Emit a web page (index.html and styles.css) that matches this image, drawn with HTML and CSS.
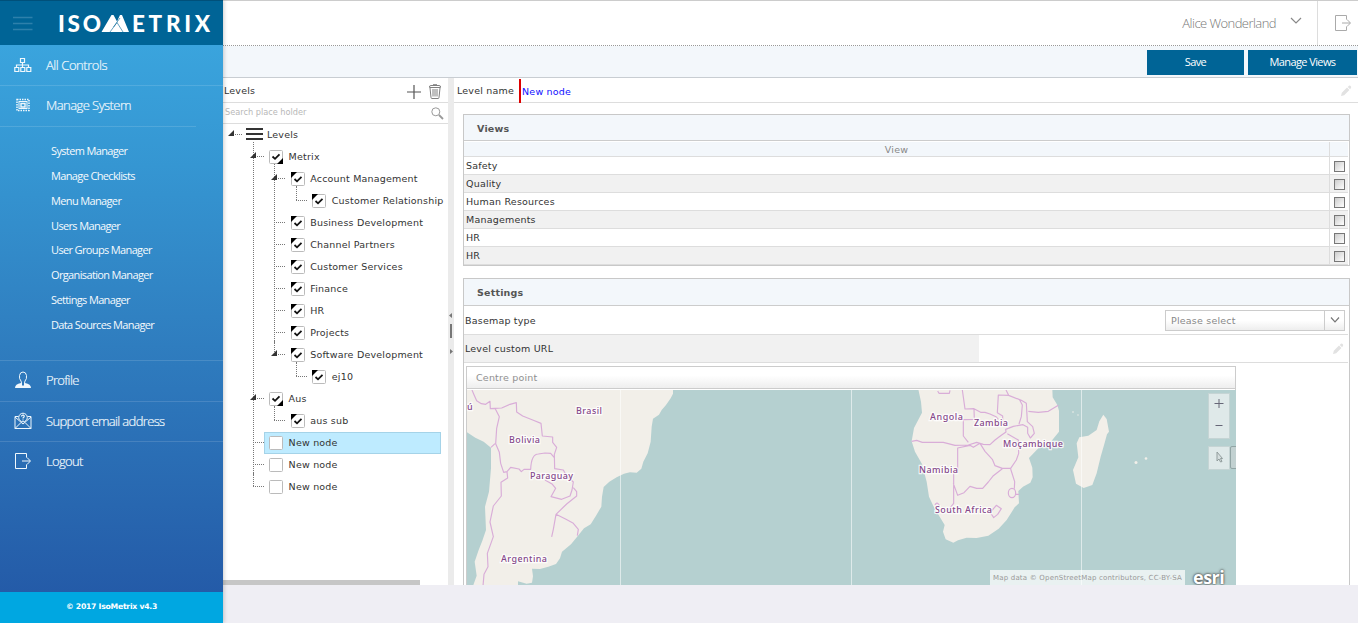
FILE: index.html
```html
<!DOCTYPE html>
<html lang="en">
<head>
<meta charset="utf-8">
<title>IsoMetrix</title>
<link rel="stylesheet" href="styles.css">
</head>
<body>
<svg class="defs" width="0" height="0" aria-hidden="true">
  <symbol id="exit" viewBox="0 0 18 18"><path d="M12.500 5.500V1.500H1.500V16.500H12.500V12.500" fill="none" stroke="currentColor"/><path d="M8 9H16M13 5.500L16.500 9L13 12.500" fill="none" stroke="currentColor"/></symbol>
  <symbol id="pencil" viewBox="0 0 12 12"><path d="M1 11L1.800 7.800L7 2.600L9.400 5L4.200 10.200ZM7.700 1.900L9 .7Q10 .3 11.200 1.800Q11.500 2.600 10.100 4.300Z" fill="currentColor"/></symbol>
  <symbol id="tick-tl" viewBox="0 0 14 14"><rect x=".5" y=".5" width="13" height="13" rx="1" fill="#fff" stroke="#bbb"/><path d="M0 0H6L0 6Z" fill="#000"/><path d="M3.500 7L6 9.300L10.500 4.800" fill="none" stroke="#111" stroke-width="1.800"/></symbol>
  <symbol id="tick-br" viewBox="0 0 14 14"><rect x=".5" y=".5" width="13" height="13" rx="1" fill="#fff" stroke="#bbb"/><path d="M14 14H8L14 8Z" fill="#000"/><path d="M3.500 6.500L6 8.800L10.500 4.300" fill="none" stroke="#111" stroke-width="1.800"/></symbol>
  <symbol id="tick-no" viewBox="0 0 14 14"><rect x=".5" y=".5" width="13" height="13" rx="1" fill="#fff" stroke="#bbb"/></symbol>
</svg>
<div class="app">
  <aside class="sidebar">
    <div class="brand">
      <svg class="burger" width="20" height="16" viewBox="0 0 20 16"><path d="M0 1.500H19.500M0 7.500H19.500M0 13.500H19.500" stroke="#2d80ab" stroke-width="1.500"/></svg>
      <svg class="logo" width="154" height="20" viewBox="0 0 154 20">
        <text x="-1" y="18" textLength="43" lengthAdjust="spacing">ISO</text>
        <path d="M42.500 18L52.500 1H54.500L58 7.500L61 1H63L70 18Z" fill="#fff"/>
        <path d="M51 18L58 8.500L64 18M54.500 13L61 4" fill="none" stroke="#006496" stroke-width=".6"/>
        <text x="73" y="18" textLength="78" lengthAdjust="spacing">ETRIX</text>
      </svg>
    </div>
    <nav class="nav">
      <a class="item"><svg width="18" height="16" viewBox="0 0 18 16"><path d="M6.500 1.500h4v4h-4zM.8 10.500h4v4h-4zM6.800 10.500h4v4h-4zM12.800 10.500h4v4h-4zM8.500 5.500V10M2.500 10V8H14.500V10" fill="none" stroke="currentColor" stroke-width="1.200"/></svg><span>All Controls</span></a>
      <a class="item parent"><svg width="18" height="16" viewBox="0 0 18 16"><rect x="3" y="2.500" width="12" height="11" fill="none" stroke="currentColor" stroke-width="1.500" stroke-dasharray="1.500 1"/><rect x="5" y="4.500" width="8" height="7" fill="none" stroke="currentColor"/><path d="M7 6.500h4v3.500h-4z" fill="none" stroke="currentColor" stroke-width="1.400"/></svg><span>Manage System</span></a>
      <div class="submenu">
        <a>System Manager</a><a>Manage Checklists</a><a>Menu Manager</a><a>Users Manager</a><a>User Groups Manager</a><a>Organisation Manager</a><a>Settings Manager</a><a>Data Sources Manager</a>
      </div>
      <a class="item"><svg width="18" height="18" viewBox="0 0 18 18"><path d="M7 10Q5 8 5.500 4.500Q6 1 9 1Q12 1 12.500 4.500Q13 8 11 10L10.500 12V15H7.500V12Z" fill="none" stroke="currentColor"/><path d="M1 17Q1 13 7 12V15H11V12Q17 13 17 17Z" fill="currentColor"/></svg><span>Profile</span></a>
      <a class="item"><svg width="18" height="18" viewBox="0 0 18 18"><path d="M4.500 4.500H1V16.500H17V4.500H13.500M1 5L9 12L17 5M1 16.500L7 10.500M17 16.500L11 10.500" fill="none" stroke="currentColor"/><circle cx="9" cy="5.500" r="4.300" fill="#2c75b8" stroke="currentColor"/><path d="M7.500 4.500Q7.700 3 9.200 3.200Q10.700 3.500 10 5Q9 5.500 9 6.500M9 7.500V8.500" fill="none" stroke="currentColor" stroke-width="1.200"/></svg><span>Support email address</span></a>
      <a class="item last"><svg width="18" height="18"><use href="#exit"/></svg><span>Logout</span></a>
    </nav>
    <footer class="copyright">© 2017 IsoMetrix v4.3</footer>
  </aside>

  <div class="content">
    <header class="topbar">
      <span class="user">Alice Wonderland</span>
      <svg class="user-arrow" width="12" height="8" viewBox="0 0 12 8"><path d="M1 1L6 6L11 1" fill="none" stroke="#888" stroke-width="1.200"/></svg>
      <div class="exit"><svg width="18" height="18"><use href="#exit"/></svg></div>
    </header>
    <div class="toolbar"><button>Save</button><button class="wide">Manage Views</button></div>
    <div class="workspace">
      <section class="levels">
        <div class="levels-head"><span>Levels</span>
          <svg width="14" height="14" viewBox="0 0 14 14"><path d="M7 0V14M0 7H14" stroke="#555" stroke-width="1.200"/></svg>
          <svg width="12" height="15" viewBox="0 0 12 15"><path d="M.5 3.500Q0 1.500 2 1.500H10Q12 1.500 11.500 3.500ZM1 4L2 13.500Q2 14.500 3 14.500H9Q10 14.500 10 13.500L11 4M4 .7H8M4 5V12.500M6 5V12.500M8 5V12.500" fill="none" stroke="#808080"/></svg>
        </div>
        <div class="search"><span>Search place holder</span><svg width="13" height="13" viewBox="0 0 13 13"><circle cx="4.800" cy="4.800" r="4" fill="none" stroke="#999"/><path d="M8 8L12 12" stroke="#999" stroke-width="1.800"/></svg></div>
        <div class="tree">
          <div class="row root open"><svg width="17" height="13" viewBox="0 0 17 13"><path d="M0 1H17M0 6H17M0 11H17" stroke="#333" stroke-width="2"/></svg><span>Levels</span></div>
          <ul>
            <li><div class="row open"><svg width="14" height="14"><use href="#tick-br"/></svg><span>Metrix</span></div>
              <ul>
                <li><div class="row open"><svg width="14" height="14"><use href="#tick-tl"/></svg><span>Account Management</span></div>
                  <ul><li><div class="row"><svg width="14" height="14"><use href="#tick-tl"/></svg><span>Customer Relationship</span></div></li></ul></li>
                <li><div class="row"><svg width="14" height="14"><use href="#tick-tl"/></svg><span>Business Development</span></div></li>
                <li><div class="row"><svg width="14" height="14"><use href="#tick-tl"/></svg><span>Channel Partners</span></div></li>
                <li><div class="row"><svg width="14" height="14"><use href="#tick-tl"/></svg><span>Customer Services</span></div></li>
                <li><div class="row"><svg width="14" height="14"><use href="#tick-tl"/></svg><span>Finance</span></div></li>
                <li><div class="row"><svg width="14" height="14"><use href="#tick-tl"/></svg><span>HR</span></div></li>
                <li><div class="row"><svg width="14" height="14"><use href="#tick-tl"/></svg><span>Projects</span></div></li>
                <li><div class="row open"><svg width="14" height="14"><use href="#tick-tl"/></svg><span>Software Development</span></div>
                  <ul><li><div class="row"><svg width="14" height="14"><use href="#tick-tl"/></svg><span>ej10</span></div></li></ul></li>
              </ul></li>
            <li><div class="row open"><svg width="14" height="14"><use href="#tick-br"/></svg><span>Aus</span></div>
              <ul><li><div class="row"><svg width="14" height="14"><use href="#tick-tl"/></svg><span>aus sub</span></div></li></ul></li>
            <li><div class="row selected"><svg width="14" height="14"><use href="#tick-no"/></svg><span>New node</span></div></li>
            <li><div class="row"><svg width="14" height="14"><use href="#tick-no"/></svg><span>New node</span></div></li>
            <li><div class="row"><svg width="14" height="14"><use href="#tick-no"/></svg><span>New node</span></div></li>
          </ul>
        </div>
        <div class="hscroll"></div>
      </section>
      <div class="splitter"><svg width="6" height="42" viewBox="0 0 6 42"><path d="M4 1V6L1 3.500ZM2 37V42L5 39.500Z" fill="#777"/><path d="M3 12V26" stroke="#777" stroke-width="2"/></svg></div>
      <section class="detail">
        <div class="level-name"><label>Level name</label><span class="value">New node</span><svg class="pencil" width="12" height="12"><use href="#pencil"/></svg></div>
        <div class="panel views">
          <h2>Views</h2>
          <div class="grid">
            <div class="grid-row head"><span>View</span><i></i></div>
            <div class="grid-row"><span>Safety</span><i><b></b></i></div>
            <div class="grid-row alt"><span>Quality</span><i><b></b></i></div>
            <div class="grid-row"><span>Human Resources</span><i><b></b></i></div>
            <div class="grid-row alt"><span>Managements</span><i><b></b></i></div>
            <div class="grid-row"><span>HR</span><i><b></b></i></div>
            <div class="grid-row alt"><span>HR</span><i><b></b></i></div>
          </div>
        </div>
        <div class="panel settings">
          <h2>Settings</h2>
          <div class="field basemap"><label>Basemap type</label>
            <div class="select"><span>Please select</span><div><svg width="10" height="6" viewBox="0 0 10 6"><path d="M1 .5L5 4.800L9 .5" fill="none" stroke="#777" stroke-width="1.200"/></svg></div></div></div>
          <div class="field url"><label>Level custom URL</label><svg class="pencil" width="12" height="12"><use href="#pencil"/></svg></div>
          <div class="map-box">
            <div class="map-title">Centre point</div>
            <div class="map">
              <svg class="map-art" width="769" height="196" viewBox="0 0 769 196">
                <rect width="769" height="196" fill="#b5d0d0"/>
                <g transform="translate(-17 -120) scale(.33333)">
                  <path class="land" d="M51 358H669V371L662 385L648 405L635 420L627 434L609 446L605 470L602 515L593 550L580 575L574 596L560 608L540 607L522 611L500 622L478 635L461 651L456 680L454 710L438 737L422 763L402 775L384 797L363 823L336 845L330 865L318 882L295 890L270 897L246 896L249 919L246 938L230 941L204 934V948H69L80 917L74 875L86 840L97 812L108 780L105 710L117 665L123 595V533L101 515L76 503L51 487Z"/>
                  <path class="border" d="M66 360L72 374L80 392L94 401L107 403L120 394L121 416L135 415L155 414L180 403L199 398L200 426L218 438L250 451L273 460L277 498L308 501V517L320 532L313 553L314 596L340 600L350 618L370 636L366 660L360 678L335 688L303 680L317 655L306 642L285 630M135 415L148 440L140 475L137 521L148 547L152 580L161 607L171 605L182 592L207 597L214 605L222 598H242Q244 552 265 552L285 549L302 550L313 563M123 532L135 521M171 605L173 624L153 637L154 678L130 708L120 756L130 800L112 850L114 890L102 913L99 948M370 653L380 665V678L350 702L318 733L310 778L305 801M318 733L348 748L370 760L385 778L382 797"/>
                </g>
                <g transform="translate(393 -10) scale(.33333)">
                  <path class="land" d="M175 28H577L578 52L592 75L597 92V155L575 182L535 205L507 234L517 263L518 292L511 308L489 320L475 333L477 370L464 382L440 420L416 446L385 467L350 474L320 473L294 481L280 488L257 478L249 455L254 435L239 410L220 378L207 350L200 305L186 252L165 215L155 184L162 144L186 98L183 65Z"/>
                  <path class="land" d="M730 104L740 117L747 155L741 163L733 192L722 230L710 280L697 315L671 324L648 311L639 270L655 232L650 190L658 172L685 167L710 150L718 124Z"/>
                  <path class="border" d="M155 184L170 181L187 187H250L285 196L325 195L350 187L370 193L390 194L405 180L425 165L438 156L437 148L460 139L489 134L503 142V160L511 174L523 160L518 140L502 125L499 70L484 61L446 46L438 30M233 33L237 40H268L270 31M307 30L315 87L342 86L343 118L310 119V168L325 187M342 86L362 97H375L390 102L408 110L415 118M446 46L415 45L412 98L428 108V135M479 60L487 75L484 110L477 132M505 94L535 97L565 94L595 76M293 280V204L330 196L340 202L360 190L375 214L397 238L405 257L427 265H452L469 240L476 220L475 180L442 161M452 267L464 305L463 326M427 266L400 287L385 306L368 325H350L330 319L312 338L293 346L280 310M281 280V370L265 390M477 343H467M225 375Q231 362 239 378M397 390L409 376L424 386L413 403L401 413L392 399Z"/>
                  <ellipse class="border" cx="456" cy="339" rx="11" ry="14"/>
                </g>
                <g fill="#f2efe9"><circle cx="669" cy="72.500" r="1.500"/><circle cx="679" cy="68.500" r="1.300"/><circle cx="606" cy="22" r=".8"/><circle cx="611" cy="25" r=".7"/></g>
                <path d="M153.500 0V196M384.500 0V196M614.500 0V196" stroke="#fff" stroke-opacity=".55"/>
                <g class="country">
                  <text x="0" y="20" textLength="5">ú</text><text x="109" y="23.500" textLength="26">Brasil</text><text x="42" y="53" textLength="31">Bolivia</text><text x="63" y="89" textLength="43">Paraguay</text><text x="34" y="172" textLength="46">Argentina</text>
                  <text x="463" y="30" textLength="33">Angola</text><text x="507" y="35.500" textLength="34">Zambia</text><text x="536" y="57" textLength="60">Moçambique</text><text x="452" y="83" textLength="39">Namibia</text><text x="468" y="123" textLength="57">South Africa</text>
                </g>
              </svg>
              <div class="zoom"><svg width="20" height="44" viewBox="0 0 20 44"><path d="M5.500 9.500H14.500M10 5V14M6.500 31.500H13.500" stroke="#667" stroke-width="1"/></svg></div>
              <div class="pointer"><svg width="20" height="22" viewBox="0 0 20 22"><path d="M8 5V14L10 12L11.500 15L13 14.500L11.500 11.500H13.500Z" fill="#d5dede" stroke="#8a9595" stroke-width=".9"/></svg></div>
              <div class="sliver"></div>
              <div class="attribution">Map data © OpenStreetMap contributors, CC-BY-SA</div>
              <div class="esri">esri</div>
            </div>
          </div>
        </div>
      </section>
    </div>
  </div>
</div>
</body>
</html>
```
FILE: styles.css
```css
* { box-sizing: border-box; }
body { margin: 0; background: #fff; font-family: "DejaVu Sans", Verdana, sans-serif; font-size: 9.5px; letter-spacing: .2px; color: #333; overflow: hidden; }
svg { display: block; flex: none; }
.defs { position: absolute; }
.app { display: flex; width: 1358px; height: 623px; background: #efeef4; }

.sidebar { width: 223px; flex: none; display: flex; flex-direction: column; font-family: "Open Sans", sans-serif; color: #fff; position: relative; z-index: 2; box-shadow: 1px 0 4px rgba(0,0,0,.2); }
.brand { height: 45px; background: #006496; border-top: 1px solid #00507a; display: flex; align-items: center; padding-left: 13px; flex: none; }
.burger { margin-top: 2px; }
.logo { margin-left: 26px; margin-top: 1px; overflow: visible; }
.logo text { font: 900 22.5px Lato, sans-serif; fill: #fff; letter-spacing: 0; }
.nav { flex: 1; background: linear-gradient(#3aa4dd, #3596d2 22%, #2f7dbf 55%, #245ba8); }
.item { display: flex; align-items: center; height: 40.5px; padding: 0 0 1px 14px; gap: 14px; font-size: 13px; font-weight: 300; letter-spacing: -.65px; border-bottom: 1px solid rgba(255,255,255,.13); color: #f0f8fd; -webkit-text-stroke: .2px currentColor; }
.item:first-child { height: 41px; letter-spacing: -.45px; }
.item.parent { border: 0; background: linear-gradient(rgba(255,255,255,.13), rgba(255,255,255,.13)) 0 100% / 196px 1px no-repeat; height: 41px; padding-bottom: 3px; }
.item.parent span { letter-spacing: -.55px; }
.item.last { border: 0; padding-bottom: 2px; }
.submenu { height: 234px; padding: 11px 0 0 51px; font-size: 11px; letter-spacing: -.64px; border-bottom: 1px solid rgba(255,255,255,.13); }
.submenu a { display: block; height: 24.85px; line-height: 25px; color: #f5fafd; }
.copyright { height: 31px; flex: none; background: #00a7e1; text-align: center; line-height: 29px; font-size: 7.7px; font-weight: 700; font-family: "DejaVu Sans", sans-serif; letter-spacing: -.25px; }

.content { flex: 1; min-width: 0; display: flex; flex-direction: column; }
.topbar { height: 46px; flex: none; background: #fff; border-top: 1px solid #ccc; border-bottom: 1px dotted #999; display: flex; align-items: center; justify-content: flex-end; }
.user { font: 300 13px "Open Sans", sans-serif; color: #777; letter-spacing: -.55px; }
.user-arrow { margin: 0 15px 4px 14px; }
.exit { width: 41px; height: 44px; border-left: 1px solid #ddd; display: flex; align-items: center; padding-left: 16px; color: #aaa; }
.toolbar { height: 32px; flex: none; background: #f3f7fb; border-bottom: 1px solid #c8cdd2; display: flex; justify-content: flex-end; gap: 4px; padding: 4px 1px 0 0; }
.toolbar button { width: 97px; height: 25px; padding: 0 0 2px; border: 0; background: #006496; color: #fff; font: 11px "Open Sans", sans-serif; letter-spacing: -.6px; }
.toolbar .wide { width: 109px; }
.workspace { display: flex; height: 507px; flex: none; background: #fff; overflow: hidden; }

.levels { width: 225px; flex: none; display: flex; flex-direction: column; overflow: hidden; }
.levels-head { height: 25px; flex: none; display: flex; align-items: center; padding: 1px 7px 0 1px; border-bottom: 1px solid #ddd; gap: 8px; }
.levels-head span { flex: 1; }
.levels-head svg { margin-top: 2px; }
.search { height: 21px; flex: none; display: flex; align-items: center; justify-content: space-between; padding: 0 4px 2px 2px; border-bottom: 1px solid #ddd; color: #b8b8b8; font-size: 8.2px; letter-spacing: 0; }
.search svg { margin-top: 3px; }
.tree { flex: 1; padding-left: 8px; white-space: nowrap; width: 223px; overflow: hidden; margin-top: -1px; }
.tree ul { list-style: none; margin: 0; padding: 0 0 0 21.6px; }
.tree li { position: relative; }
.tree li::before { content: ""; position: absolute; left: 0; top: -3px; height: calc(100% + 3px); border-left: 1px dotted #777; }
.tree li:last-child::before { height: 14px; }
.row { position: relative; display: flex; align-items: center; height: 22px; padding: 1px 0 0 16.5px; }
.row::before { content: ""; position: absolute; left: 0; top: 11px; width: 11px; border-top: 1px dotted #777; }
.row.open::after { content: ""; position: absolute; left: -3px; top: 7px; border-left: 6px solid transparent; border-bottom: 6px solid #333; }
.row span { margin: -1px 0 0 5.5px; }
.root { padding-left: 15px; }
.root span { margin-left: 4px; }
.selected { margin-left: 11px; padding: 0 0 0 4.5px; border: 1px solid #a5d3e8; background: #beebff; width: 177px; top: 1px; }
.selected span { margin-top: -2px; }
.selected::before { left: -12px; top: 9px; }
.hscroll { width: 197px; height: 5px; background: #c6c6c6; flex: none; }
.splitter { width: 6px; flex: none; background: #ebebeb; padding-top: 234px; }

.detail { flex: 1; min-width: 0; }
.level-name { height: 25px; border-bottom: 1px solid #ddd; display: flex; align-items: center; padding: 1px 6px 0 3px; }
.value { color: #1010ff; border-left: 2px solid #d00; height: 24px; line-height: 26px; padding-left: 1px; margin-left: 5px; flex: 1; }
.pencil { color: #e2e2e2; }
.panel { margin: 11px 8px 0 9px; border: 1px solid #c8c8c8; }
.panel h2 { margin: 0; height: 26px; line-height: 27px; padding-left: 13px; font-size: 9.5px; background: #f3f7fb; border-bottom: 1px solid #ccc; color: #555; letter-spacing: .2px; }
.grid { padding: 1px 1px 0 0; }
.grid-row { height: 18px; display: flex; border-bottom: 1px solid #ddd; }
.grid-row.alt { background: #f1f1f1; }
.grid-row span { flex: 1; line-height: 18px; padding-left: 2px; }
.grid-row i { width: 19px; border-left: 1px solid #ddd; padding: 4px 0 0 4px; }
.grid-row b { display: block; width: 11px; height: 11px; border: 1px solid #777; background: linear-gradient(135deg, #ccc, #fff); }
.grid-row.head { height: 15px; background: #f3f7fb; color: #888; text-align: center; }
.grid-row.head span { line-height: 16px; padding: 0; }
.settings { margin-top: 12px; height: 400px; }
.settings h2 { height: 27px; }
.field { height: 29px; border-bottom: 1px solid #ddd; display: flex; align-items: center; justify-content: space-between; padding: 0 3px 0 1px; margin-right: 1px; }
.select { width: 180px; height: 21px; border: 1px solid #ccc; display: flex; background: linear-gradient(#fff 50%, #eee); color: #888; line-height: 20px; }
.select span { flex: 1; padding-left: 5px; }
.select div { width: 20px; border-left: 1px solid #ccc; display: flex; align-items: center; justify-content: center; }
.field.url { height: 28px; padding-right: 4px; background: linear-gradient(to right, #f1f1f1 515px, #fff 515px); }
.map-box { width: 770px; margin: 3px 0 0 2px; border: 1px solid #ccc; border-bottom: 0; }
.map-title { height: 22px; line-height: 21px; padding-left: 9px; color: #909090; background: linear-gradient(#fff 40%, #eee); border-bottom: 1px solid #ccc; }
.map { position: relative; margin-top: 1px; height: 196px; overflow: hidden; width: 769px; }
.land { fill: #f2efe9; }
.border { fill: none; stroke: #d9add8; stroke-width: 3.5; stroke-linejoin: round; }
.country text { font: 500 9px "Noto Sans", sans-serif; letter-spacing: 0; fill: #85498a; stroke: #fff; stroke-opacity: .8; stroke-width: 2.5px; paint-order: stroke; }
.zoom, .pointer { position: absolute; left: 741px; top: 3px; width: 22px; height: 46px; border: 1px solid #c5d4d4; background: #dfe9e9; }
.pointer { top: 56px; height: 24px; }
.sliver { position: absolute; left: 763px; top: 56px; width: 8px; height: 23px; border: 1px solid #92a5a5; background: #c2d1d1; border-radius: 2px; }
.attribution { position: absolute; left: 523px; top: 180px; width: 195px; height: 16px; line-height: 17px; padding-left: 3px; background: rgba(255,255,255,.7); color: #999; font-size: 7px; letter-spacing: .19px; white-space: nowrap; }
.esri { position: absolute; left: 726px; top: 178px; font: 700 18px/18px "Open Sans", sans-serif; color: #fff; text-shadow: 0 0 2px #444, 0 0 3px #555; letter-spacing: -.5px; }
```
